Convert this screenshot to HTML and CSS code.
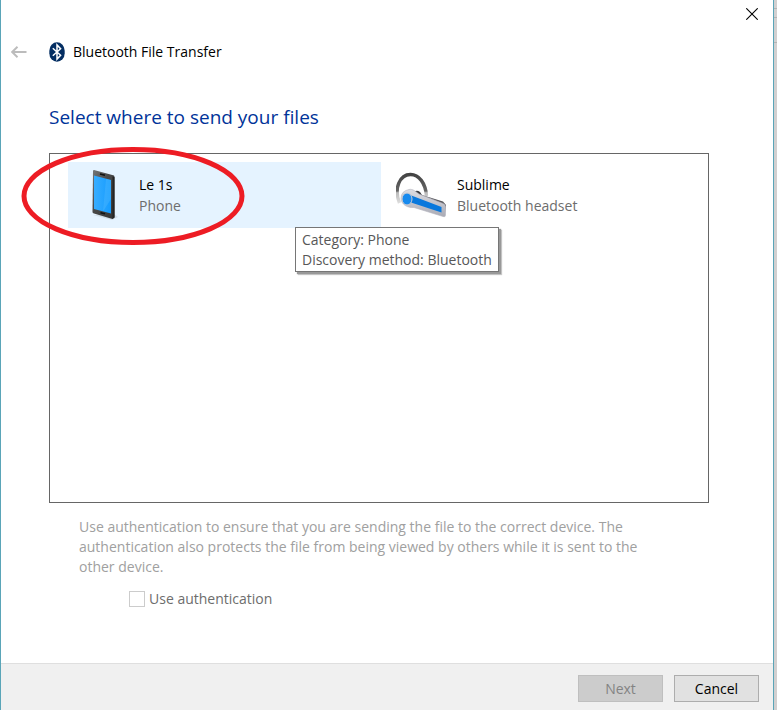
FILE: index.html
```html
<!DOCTYPE html>
<html lang="en">
<head>
<meta charset="utf-8">
<title>Bluetooth File Transfer</title>
<link rel="stylesheet" href="styles.css">
</head>
<body>
<main class="dialog">
  <div class="titlebar">
    <button class="icon-button" type="button" aria-label="Close">
      <svg width="12" height="12" viewBox="0 0 12 12"><path d="M.3 .3 11.7 11.7M11.7 .3 .3 11.7" stroke="#000" stroke-width="1.1"/></svg>
    </button>
  </div>
  <header class="header">
    <button class="icon-button" type="button" aria-label="Back" disabled>
      <svg width="16" height="12" viewBox="0 0 16 12"><path d="M1 6H15.500M6.500 .8 1.200 6 6.500 11.200" fill="none" stroke="#bcbcbc" stroke-width="1.900"/></svg>
    </button>
    <svg class="logo" width="16" height="20" viewBox="0 0 16 20"><rect x=".3" y=".3" width="15.400" height="19.400" rx="7.700" ry="8.500" fill="#042e62"/><path d="M3.800 6.200 11.600 13.200 8 17V3L11.600 6.800 3.800 13.800" fill="none" stroke="#fff" stroke-width="1.500"/></svg>
    <span>Bluetooth File Transfer</span>
  </header>
  <section class="content">
    <h1 class="heading">Select where to send your files</h1>
    <div class="devices">
      <button class="device selected" type="button" aria-describedby="device-tip">
        <svg class="device-icon" width="52" height="52" viewBox="0 0 52 52">
          <defs>
            <linearGradient id="body" x1="0" y1="0" x2="1" y2="1"><stop offset="0" stop-color="#777"/><stop offset=".4" stop-color="#4a4a4a"/><stop offset="1" stop-color="#333"/></linearGradient>
            <linearGradient id="screen" x1="0" y1="0" x2="1" y2="0"><stop offset="0" stop-color="#38adff"/><stop offset="1" stop-color="#159cff"/></linearGradient>
          </defs>
          <path d="M15 46 34 51 40 48 36 45Z" fill="#cbd6df" opacity=".7"/>
          <path d="M15 1.500 16 1 36 6.500Q36.500 7 36.500 9V48.500L34.500 50 16 44.500Q14.500 44 14.500 43Z" fill="url(#body)"/>
          <path d="M34.500 7.500 36.500 8V48.500L34.500 50Z" fill="#242424"/>
          <path d="M16 6.500 33 11V44.500L16 40Z" fill="url(#screen)"/>
          <path d="M28 9.700 33 11V30L25 42.400Z" fill="#51b8ff" opacity=".4"/>
          <path d="M22 5 27 6.300M22.500 43.700 27 44.800" stroke="#111" stroke-width="1.500"/>
        </svg>
        <span class="device-text"><span class="device-name">Le 1s</span><span class="device-kind">Phone</span></span>
        <svg class="mark" width="224" height="100" viewBox="0 0 224 100" aria-hidden="true"><ellipse cx="112" cy="50" rx="109" ry="46.500" fill="none" stroke="#ed1c24" stroke-width="5"/></svg>
        <span class="tooltip" id="device-tip" role="tooltip">Category: Phone<br>Discovery method: Bluetooth</span>
      </button>
      <button class="device" type="button">
        <svg class="device-icon" width="52" height="52" viewBox="0 0 52 52">
          <defs>
            <linearGradient id="loop" x1="0" y1="0" x2="0" y2="1"><stop offset="0" stop-color="#444"/><stop offset=".58" stop-color="#666"/><stop offset=".64" stop-color="#bbb"/><stop offset="1" stop-color="#ddd"/></linearGradient>
            <linearGradient id="shell" x1="0" y1="0" x2="0" y2="1"><stop offset="0" stop-color="#dedee3"/><stop offset="1" stop-color="#a9aab4"/></linearGradient>
          </defs>
          <path d="M3.500 34C-2.500 19 4 5.500 14.500 5.500C23 5.500 29.500 14 30.500 27" fill="none" stroke="url(#loop)" stroke-width="3.400"/>
          <path d="M17 24Q20 20 24 23L28 29 19 30Z" fill="#3b3b3f"/>
          <path d="M26 26 47 32.500 50 36 49 44 26 35Z" fill="#57575c"/>
          <path d="M13 20.500C17 19.500 20 23 23 25L47 34.500Q49.500 35.500 49.500 37.500V46Q49.500 48.500 47 47.500L18 38.500C12 39 5.500 36 5 29.500Q5 22 13 20.500Z" fill="url(#shell)" stroke="#b4b4bd" stroke-width=".6"/>
          <path d="M14 26 45.500 38V43.500L15 33.500Z" fill="#0878dd"/>
          <ellipse cx="11" cy="30" rx="5" ry="6" fill="#178aee" stroke="#cdcdd5"/>
        </svg>
        <span class="device-text"><span class="device-name">Sublime</span><span class="device-kind">Bluetooth headset</span></span>
      </button>
    </div>
    <p class="note">Use authentication to ensure that you are sending the file to the correct device. The authentication also protects the file from being viewed by others while it is sent to the other device.</p>
    <label class="check"><input type="checkbox" disabled>Use authentication</label>
  </section>
  <footer class="footer">
    <button class="button" type="button" disabled>Next</button>
    <button class="button" type="button">Cancel</button>
  </footer>
</main>
<aside class="backdrop" aria-hidden="true"></aside>
</body>
</html>
```
FILE: styles.css
```css
* { box-sizing: border-box; }
body {
  margin: 0;
  min-height: 100vh;
  display: flex;
  background: #fff;
  color: #000;
  font: 14px/20px "Open Sans", "Noto Sans", sans-serif;
}
button { font: inherit; color: inherit; }
svg { display: block; flex: none; }
.dialog {
  flex: 1;
  display: flex;
  flex-direction: column;
  border: solid #5aa5b8;
  border-width: 0 1px;
}
.backdrop {
  width: 3px;
  background: linear-gradient(#b4b4b4 0 0) 0 8px / 100% 1px no-repeat,
    linear-gradient(#b4b4b4 0 0) 0 17px / 100% 1px no-repeat,
    linear-gradient(#b4b4b4 0 0) 0 42px / 100% 1px no-repeat, #d2d0d0;
}
.icon-button { padding: 0; border: 0; background: none; }
.titlebar {
  display: flex;
  justify-content: flex-end;
  padding: 8px 15px 0 0;
  height: 42px;
}
.titlebar .icon-button { height: 12px; }
.header {
  display: flex;
  align-items: center;
  padding-left: 10px;
  height: 20px;
}
.logo { margin: 0 8px 0 22px; }
.content { flex: 1; padding: 42px 64px 0 48px; }
.heading {
  margin: 0 0 23px;
  color: #003399;
  font-size: 19px;
  font-weight: 400;
  line-height: 26px;
}
.devices {
  display: grid;
  grid-template-columns: 1fr 1fr;
  align-content: start;
  gap: 5px;
  min-height: 350px;
  padding: 8px 9px 8px 18px;
  border: 1px solid #666;
}
.device {
  position: relative;
  display: flex;
  align-items: center;
  gap: 9px;
  height: 66px;
  padding: 0 10px;
  border: 0;
  background: none;
  text-align: left;
}
.selected { background: #e5f3ff; }
.device-text { display: grid; line-height: 21px; }
.device-kind { color: #6d6d6d; }
.mark {
  position: absolute;
  left: -47px;
  top: -16px;
  pointer-events: none;
}
.tooltip {
  position: absolute;
  z-index: 1;
  left: 227px;
  top: 65px;
  padding: 2px 6px 1px;
  border: 1px solid #767676;
  background: #fff;
  box-shadow: 2px 2px 1px #999, 3px 3px 1px #ccc;
  color: #575757;
  white-space: nowrap;
}
.note { margin: 14px 40px 12px 30px; color: #a0a0a0; }
.check {
  display: inline-flex;
  align-items: center;
  gap: 4px;
  margin-left: 80px;
  color: #6d6d6d;
}
.check input {
  appearance: none;
  width: 16px;
  height: 16px;
  margin: 0;
  border: 1px solid #ccc;
  background: #fff;
}
.footer {
  display: flex;
  justify-content: flex-end;
  gap: 11px;
  padding: 11px 14px 8px;
  border-top: 1px solid #dfdfdf;
  background: #f0f0f0;
}
.button {
  width: 85px;
  height: 27px;
  padding: 0;
  border: 1px solid #adadad;
  background: #e1e1e1;
}
.button:disabled { border-color: #bfbfbf; background: #ccc; color: #838383; }
```
